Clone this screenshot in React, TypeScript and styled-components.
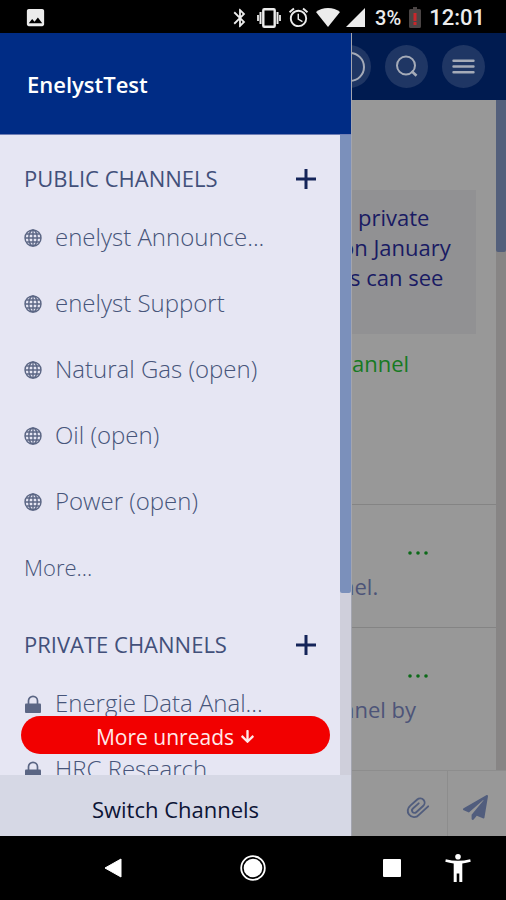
import React from "react";
import styled, { createGlobalStyle } from "styled-components";
import { MdAlarm, MdBluetooth, MdImage } from "react-icons/md";
import { FaArrowDown, FaPaperPlane } from "react-icons/fa";

const GlobalStyle = createGlobalStyle`
  *, *::before, *::after { box-sizing: border-box; }
  body {
    margin: 0;
    background: #000;
    font-family: "Open Sans", "Noto Sans", sans-serif;
  }
  button {
    font: inherit;
    color: inherit;
    background: none;
    border: 0;
    padding: 0;
    cursor: pointer;
  }
  ul { list-style: none; margin: 0; padding: 0; }
  h1, h2, p { margin: 0; }
  svg { display: block; flex: none; }
`;

const Screen = styled.div`
  display: flex;
  flex-direction: column;
  height: 100vh;
  overflow: hidden;
`;

const StatusBar = styled.header`
  display: flex;
  align-items: center;
  justify-content: space-between;
  flex: none;
  height: 33px;
  padding: 2px 21px 0 24px;
  background: #000;
  color: #ececec;
  font-family: Roboto, sans-serif;
  font-size: 22px;
  font-weight: 500;
  line-height: 28px;
`;

const StatusGroup = styled.div`
  display: flex;
  align-items: center;
  gap: 8px;
`;

const StatusIcons = styled.div`
  display: flex;
  align-items: center;
  gap: 6px;
  margin-right: 2px;
`;

const StatusValue = styled.span`
  font-size: 20px;
`;

const AppArea = styled.div`
  position: relative;
  display: flex;
  flex: 1;
  min-height: 0;
`;

/* Conversation behind the drawer */

const Chat = styled.main`
  display: flex;
  flex-direction: column;
  flex: 1;
  min-width: 0;
  background: #989898;
  color: #4d5478;
  font-size: 22px;
  line-height: 30px;
`;

const ChatHeader = styled.div`
  display: flex;
  align-items: center;
  justify-content: flex-end;
  gap: 14px;
  flex: none;
  height: 67px;
  padding: 0 21px;
  background: #001b50;
`;

const RoundButton = styled.button`
  display: flex;
  align-items: center;
  justify-content: center;
  width: 43px;
  height: 43px;
  border-radius: 50%;
  background: #1f3664;
  color: #a5abb8;
`;

const ChatBody = styled.div`
  display: flex;
  flex: 1;
  min-height: 0;
`;

const Messages = styled.div`
  flex: 1;
  min-width: 0;
  overflow: hidden;
`;

const Intro = styled.section`
  height: 404px;
  padding: 90px 20px 0 0;
`;

const Notice = styled.div`
  height: 144px;
  padding: 12px 0;
  background: #919193;
  color: #191b63;
`;

const Line = styled.p<{ $start: number }>`
  padding-left: ${(p) => p.$start}px;
  white-space: nowrap;
`;

const InviteLink = styled.a`
  display: block;
  margin-top: 14px;
  padding-left: 328px;
  color: #167a22;
  text-decoration: none;
`;

const Message = styled.article`
  height: 123px;
  padding-top: 33px;
  border-top: 1px solid #848484;
`;

const MoreButton = styled.button`
  display: flex;
  align-items: center;
  height: 30px;
  margin: 0 68px 3px auto;
  color: #0c6a18;
`;

const ScrollTrack = styled.div<{ $dim?: boolean }>`
  flex: none;
  width: ${(p) => (p.$dim ? 10 : 11)}px;
  background: ${(p) => (p.$dim ? "#878585" : "#cfcfdb")};
`;

const ScrollThumb = styled.div<{ $dim?: boolean }>`
  height: ${(p) => (p.$dim ? 152 : 458)}px;
  border-radius: 0 0 2px 2px;
  background: ${(p) => (p.$dim ? "#535f7b" : "#7b90bb")};
`;

const Composer = styled.div`
  display: flex;
  flex: none;
  justify-content: flex-end;
  height: 66px;
  border-top: 1px solid #8d8d8d;
  color: #515d7d;
`;

const ComposerButton = styled.button`
  display: flex;
  align-items: center;
  justify-content: center;
  width: 59px;
  padding-top: 8px;

  & + & {
    padding-right: 3px;
    border-left: 1px solid #8d8d8d;
  }
`;

/* Channel drawer */

const Drawer = styled.aside`
  position: absolute;
  top: 0;
  bottom: 0;
  left: 0;
  display: flex;
  flex-direction: column;
  width: 352px;
  border-right: 1px solid #a3a5af;
  background: #e6e6f3;
  color: #5b6684;
`;

const DrawerHeader = styled.div`
  display: flex;
  align-items: center;
  flex: none;
  height: 102px;
  padding: 0 27px;
  border-bottom: 1px solid #6f7eb5;
  background: #002c85;
  color: #fff;
`;

const TeamName = styled.h1`
  font-size: 22px;
  font-weight: 600;
  line-height: 30px;
`;

const DrawerBody = styled.div`
  position: relative;
  display: flex;
  flex: 1;
  min-height: 0;
`;

const ChannelList = styled.nav`
  flex: 1;
  min-width: 0;
  overflow: hidden;
`;

const Section = styled.section`
  padding-top: 18px;
`;

const SectionHeader = styled.div`
  display: flex;
  align-items: center;
  justify-content: space-between;
  height: 52px;
  padding: 0 24px;
  color: #42507a;
`;

const SectionTitle = styled.h2`
  padding-bottom: 2px;
  font-size: 22px;
  font-weight: 400;
  line-height: 30px;
`;

const AddButton = styled.button`
  color: #142459;
`;

const ChannelLink = styled.a`
  display: flex;
  align-items: center;
  gap: 13px;
  height: 66px;
  padding: 0 24px;
  color: #47557a;
  font-weight: 300;
  line-height: 30px;
  text-decoration: none;
  white-space: nowrap;
`;

const ChannelName = styled.span`
  padding-bottom: 2px;
  font-size: 24px;
`;

const MoreLabel = styled.span`
  padding-bottom: 2px;
  font-size: 22px;
`;

const MoreUnreads = styled.button`
  position: absolute;
  right: 21px;
  bottom: 21px;
  left: 21px;
  display: flex;
  align-items: center;
  justify-content: center;
  gap: 6px;
  height: 38px;
  padding-top: 3px;
  border-radius: 19px;
  background: #f20000;
  color: #ffe9e9;
  font-size: 21px;
  line-height: 30px;
`;

const SwitchButton = styled.button`
  flex: none;
  height: 61px;
  padding-top: 7px;
  background: #d6d8e5;
  color: #0c1436;
  font-size: 22px;
  font-weight: 500;
  line-height: 30px;
`;

/* Android navigation */

const SystemNav = styled.nav`
  display: flex;
  align-items: center;
  justify-content: flex-end;
  flex: none;
  height: 64px;
  padding-right: 35px;
  background: #000;
  color: #fff;
`;

const SystemKeys = styled.div`
  display: flex;
  align-items: center;
  justify-content: space-between;
  width: 297px;
  margin-right: 44px;
`;

const GlobeIcon = () => (
  <svg width="18" height="18" viewBox="0 0 18 18" fill="none" stroke="#5b6684" strokeWidth="1.4">
    <circle cx="9" cy="9" r="8" />
    <ellipse cx="9" cy="9" rx="4.2" ry="8" />
    <path d="M9 1v16M1 9h16M2.4 5h13.2M2.4 13h13.2" />
  </svg>
);

const LockIcon = () => (
  <svg width="18" height="20" viewBox="0 0 18 20">
    <rect x="1" y="9.500" width="16" height="9.500" rx="1" fill="#5b6684" />
    <path d="M4.500 10V6.800a4.500 4.500 0 0 1 9 0V10" fill="none" stroke="#5b6684" strokeWidth="1.700" />
  </svg>
);

const PlusIcon = () => (
  <svg width="20" height="20" viewBox="0 0 20 20" stroke="currentColor" strokeWidth="3">
    <path d="M10 0v20M0 10h20" />
  </svg>
);

const DotsIcon = () => (
  <svg width="20" height="4" viewBox="0 0 20 4" fill="currentColor">
    <circle cx="2" cy="2" r="1.800" />
    <circle cx="10" cy="2" r="1.800" />
    <circle cx="18" cy="2" r="1.800" />
  </svg>
);

const RingIcon = () => (
  <svg width="30" height="30" viewBox="0 0 30 30" fill="none" stroke="currentColor" strokeWidth="2">
    <circle cx="15" cy="15" r="14" />
  </svg>
);

const SearchIcon = () => (
  <svg width="23" height="23" viewBox="0 0 23 23" fill="none" stroke="currentColor" strokeWidth="2">
    <circle cx="11" cy="10.500" r="9" />
    <path d="M16.500 16l5 4.800" strokeWidth="2.600" />
  </svg>
);

const MenuIcon = () => (
  <svg width="23" height="15" viewBox="0 0 23 15" stroke="currentColor" strokeWidth="2.4" strokeLinecap="round">
    <path d="M1.500 1.700h20M1.500 7.500h20M1.500 13.300h20" />
  </svg>
);

const ClipIcon = () => (
  <svg width="24" height="24" viewBox="0 0 24 24" fill="none" stroke="currentColor" strokeWidth="1.900" strokeLinecap="round">
    <g transform="rotate(5 12 12)">
      <path d="M22 9.500l-8.500 9.300a6.300 6.300 0 0 1-9.900.5 6.300 6.300 0 0 1 .3-8.700l6.600-7a4.400 4.400 0 0 1 6.300-.2 4.400 4.400 0 0 1 .1 6.200l-6.300 6.800a2.500 2.500 0 0 1-3.600.1 2.500 2.500 0 0 1 0-3.500l5.300-5.700" />
    </g>
  </svg>
);

const VibrateIcon = () => (
  <svg width="24" height="20" viewBox="0 0 24 20" fill="none" stroke="currentColor">
    <rect x="6.300" y="1.300" width="11.400" height="17.400" rx="1" strokeWidth="2.400" />
    <path d="M3.500 4v12M20.500 4v12" strokeWidth="2" />
    <path d="M1 7v6M23 7v6" strokeWidth="1.800" />
  </svg>
);

const WifiIcon = () => (
  <svg width="24" height="19" viewBox="0 0 24 19" fill="currentColor">
    <path d="M12 19L0 4Q5 0 12 0t12 4z" />
  </svg>
);

const SignalIcon = () => (
  <svg width="19" height="19" viewBox="0 0 19 19" fill="currentColor">
    <path d="M19 0v19H0z" />
  </svg>
);

const BatteryIcon = () => (
  <svg width="12" height="21" viewBox="0 0 12 21">
    <path d="M4 0h4v2h2.500q1.500 0 1.500 1.500v16q0 1.500-1.500 1.500h-9Q0 21 0 19.500v-16Q0 2 1.500 2H4z" fill="#4b4545" />
    <path d="M4.500 6h3v8h-3zM4.500 15h3v3h-3z" fill="#c9272b" />
  </svg>
);

const BackIcon = () => (
  <svg width="18" height="20" viewBox="0 0 18 20" fill="currentColor">
    <path d="M17 1v18L1 10z" stroke="currentColor" strokeLinejoin="round" />
  </svg>
);

const HomeIcon = () => (
  <svg width="26" height="26" viewBox="0 0 26 26">
    <circle cx="13" cy="13" r="11.800" fill="none" stroke="currentColor" strokeWidth="1.800" />
    <circle cx="13" cy="13" r="9.300" fill="currentColor" />
  </svg>
);

const RecentsIcon = () => (
  <svg width="18" height="18" viewBox="0 0 18 18" fill="currentColor">
    <rect width="18" height="18" rx="1" />
  </svg>
);

const AccessibilityIcon = () => (
  <svg width="26" height="28" viewBox="0 0 26 28" fill="currentColor">
    <circle cx="13" cy="2.800" r="2.800" />
    <path d="M.8 5.200Q13 8.200 25.200 5.200l.5 2.600Q21.500 8.900 17.300 9.400V28h-3V19.500h-2.600V28h-3V9.400Q4.500 8.900.3 7.800z" />
  </svg>
);

const publicChannels = [
  "enelyst Announce...",
  "enelyst Support",
  "Natural Gas (open)",
  "Oil (open)",
  "Power (open)",
];

const privateChannels = ["Energie Data Anal...", "HRC Research"];

type ChannelSectionProps = {
  title: string;
  channels: string[];
  icon: React.ReactNode;
  more?: boolean;
};

function ChannelSection({ title, channels, icon, more }: ChannelSectionProps) {
  return (
    <Section aria-label={title}>
      <SectionHeader>
        <SectionTitle>{title}</SectionTitle>
        <AddButton aria-label={`Add to ${title}`}>
          <PlusIcon />
        </AddButton>
      </SectionHeader>
      <ul>
        {channels.map((name) => (
          <li key={name}>
            <ChannelLink href="#">
              {icon}
              <ChannelName>{name}</ChannelName>
            </ChannelLink>
          </li>
        ))}
        {more && (
          <li>
            <ChannelLink href="#">
              <MoreLabel>More...</MoreLabel>
            </ChannelLink>
          </li>
        )}
      </ul>
    </Section>
  );
}

export default function App() {
  return (
    <Screen>
      <GlobalStyle />
      <StatusBar>
        <MdImage size={23} />
        <StatusGroup>
          <StatusIcons>
            <MdBluetooth size={22} />
            <VibrateIcon />
            <MdAlarm size={23} />
            <WifiIcon />
            <SignalIcon />
          </StatusIcons>
          <StatusValue>3%</StatusValue>
          <BatteryIcon />
          <time>12:01</time>
        </StatusGroup>
      </StatusBar>

      <AppArea>
        <Chat>
          <ChatHeader>
            <RoundButton aria-label="Info">
              <RingIcon />
            </RoundButton>
            <RoundButton aria-label="Search">
              <SearchIcon />
            </RoundButton>
            <RoundButton aria-label="Menu">
              <MenuIcon />
            </RoundButton>
          </ChatHeader>
          <ChatBody>
            <Messages>
              <Intro>
                <Notice>
                  <Line $start={358}>private</Line>
                  <Line $start={341}>on January</Line>
                  <Line $start={350}>s can see</Line>
                </Notice>
                <InviteLink href="#">channel</InviteLink>
              </Intro>
              <Message>
                <MoreButton aria-label="Message options">
                  <DotsIcon />
                </MoreButton>
                <Line $start={341}>nel.</Line>
              </Message>
              <Message>
                <MoreButton aria-label="Message options">
                  <DotsIcon />
                </MoreButton>
                <Line $start={341}>nnel by</Line>
              </Message>
            </Messages>
            <ScrollTrack $dim>
              <ScrollThumb $dim />
            </ScrollTrack>
          </ChatBody>
          <Composer>
            <ComposerButton aria-label="Attach file">
              <ClipIcon />
            </ComposerButton>
            <ComposerButton aria-label="Send">
              <FaPaperPlane size={25} />
            </ComposerButton>
          </Composer>
        </Chat>

        <Drawer>
          <DrawerHeader>
            <TeamName>EnelystTest</TeamName>
          </DrawerHeader>
          <DrawerBody>
            <ChannelList>
              <ChannelSection title="PUBLIC CHANNELS" channels={publicChannels} icon={<GlobeIcon />} more />
              <ChannelSection title="PRIVATE CHANNELS" channels={privateChannels} icon={<LockIcon />} />
            </ChannelList>
            <ScrollTrack>
              <ScrollThumb />
            </ScrollTrack>
            <MoreUnreads>
              More unreads
              <FaArrowDown size={15} />
            </MoreUnreads>
          </DrawerBody>
          <SwitchButton>Switch Channels</SwitchButton>
        </Drawer>
      </AppArea>

      <SystemNav>
        <SystemKeys>
          <button aria-label="Back">
            <BackIcon />
          </button>
          <button aria-label="Home">
            <HomeIcon />
          </button>
          <button aria-label="Recent apps">
            <RecentsIcon />
          </button>
        </SystemKeys>
        <button aria-label="Accessibility">
          <AccessibilityIcon />
        </button>
      </SystemNav>
    </Screen>
  );
}
